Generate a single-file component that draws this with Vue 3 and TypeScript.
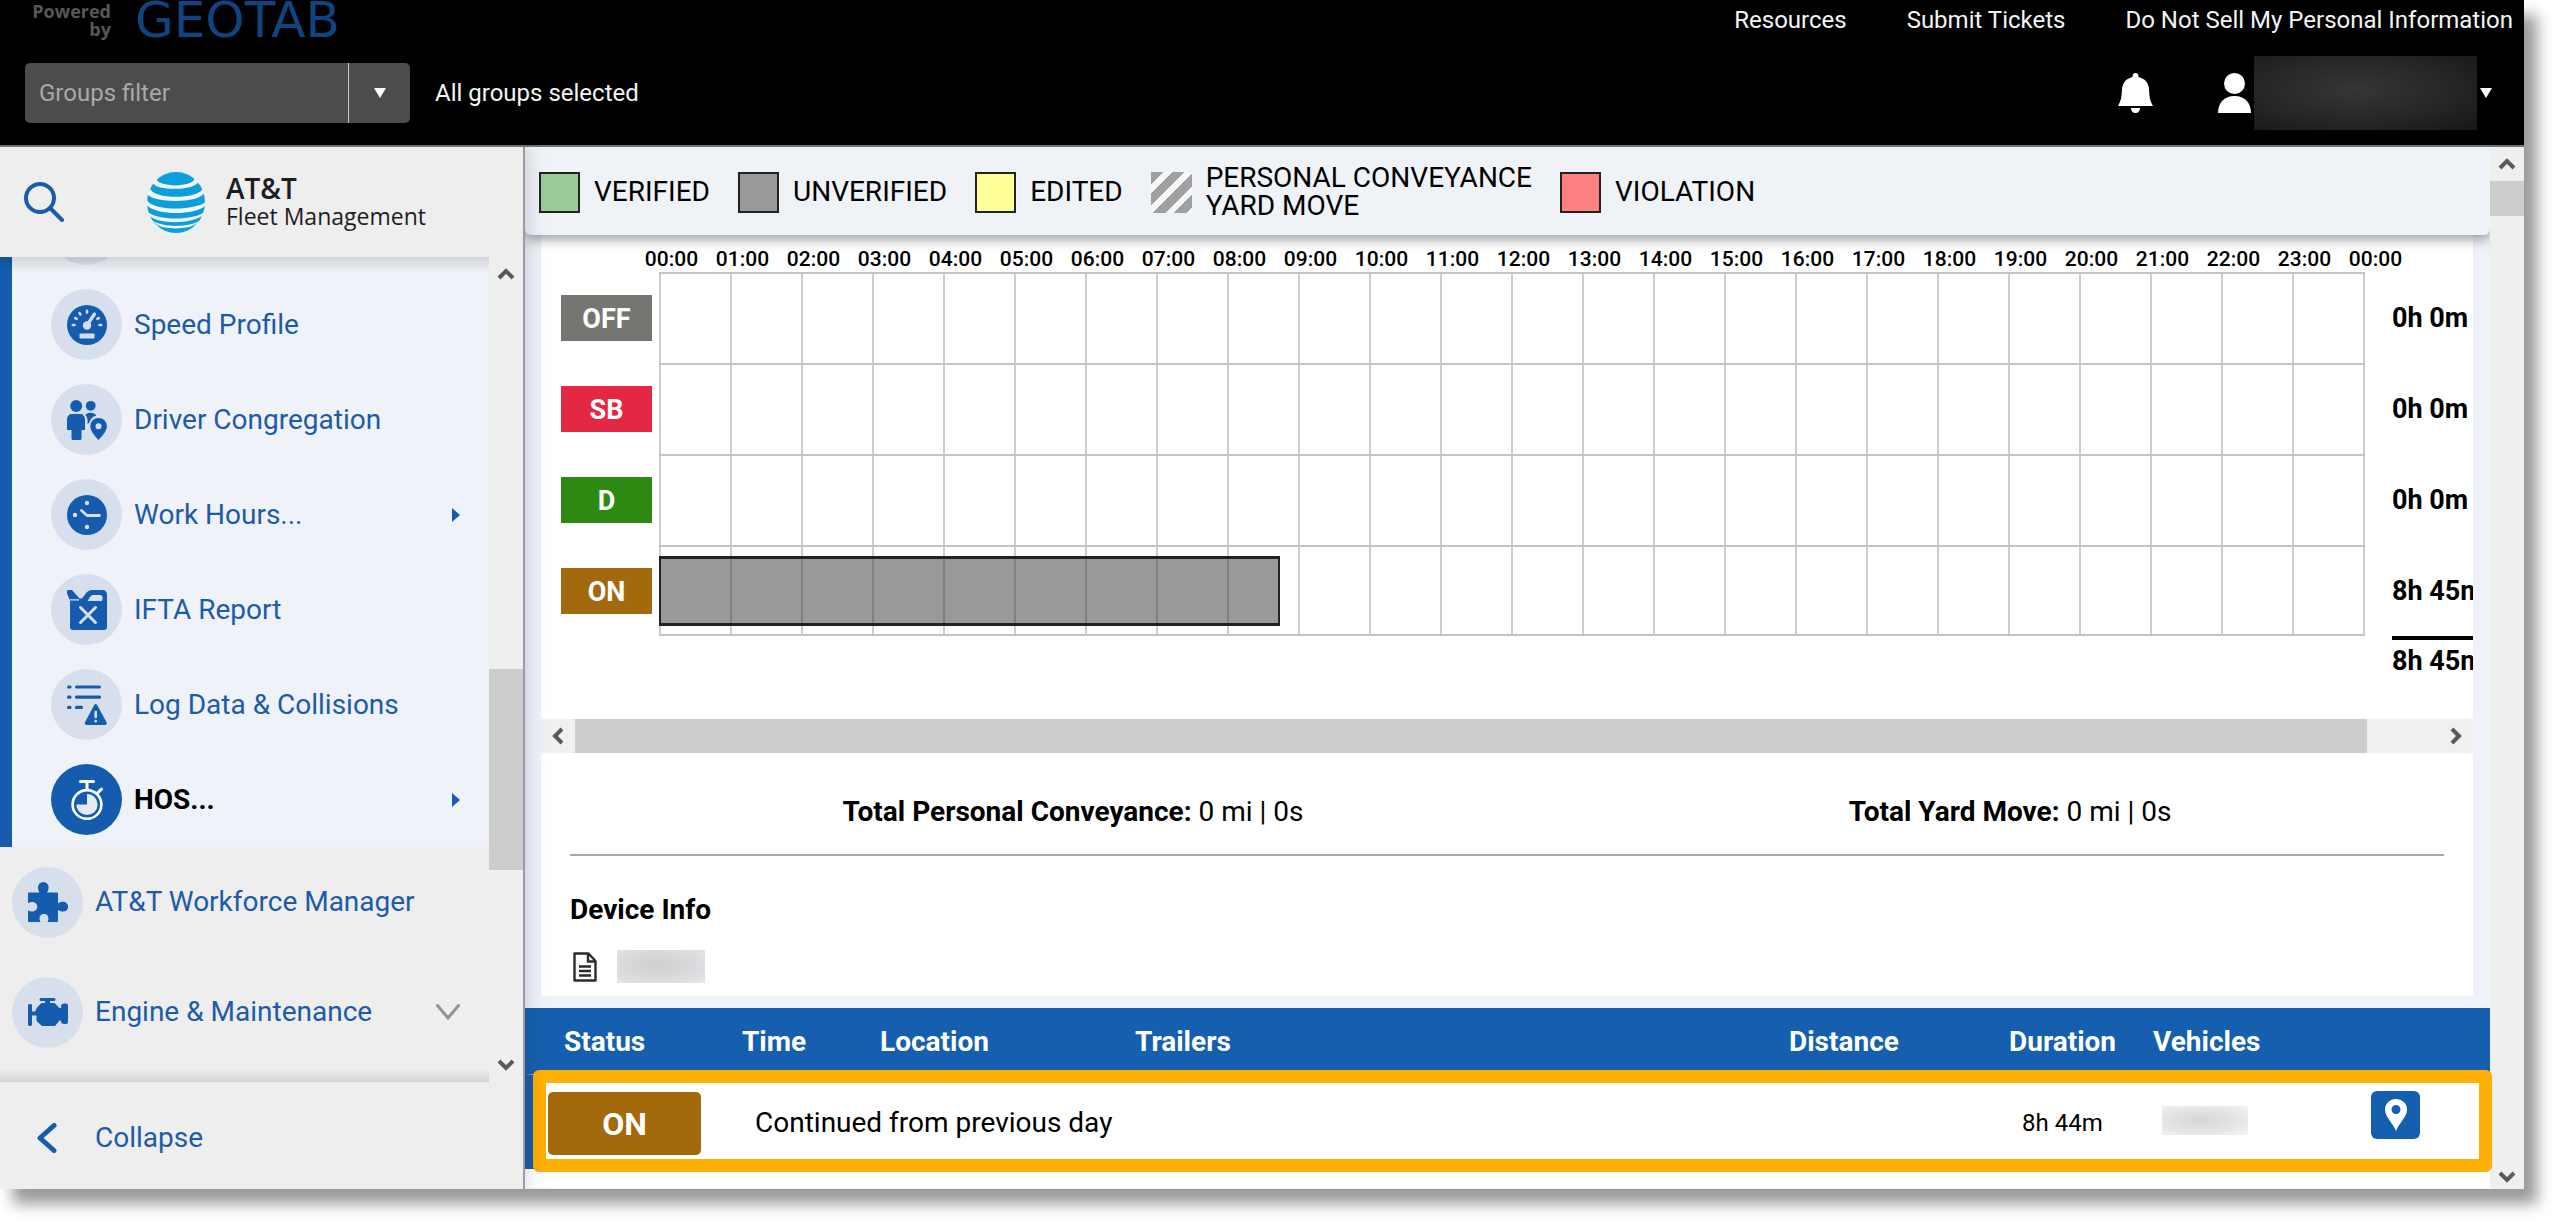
<script setup lang="ts">
import { ref } from 'vue'

interface MenuItem {
  label: string
  icon: string
  active?: boolean
  more?: boolean
}

interface DutyRow {
  code: string
  tone: string
  total: string
  hours: number
}

const filter = ref('')

const reportItems: MenuItem[] = [
  { label: 'Speed Profile', icon: 'speed' },
  { label: 'Driver Congregation', icon: 'drivers' },
  { label: 'Work Hours...', icon: 'clock', more: true },
  { label: 'IFTA Report', icon: 'fuel' },
  { label: 'Log Data & Collisions', icon: 'log' },
  { label: 'HOS...', icon: 'stopwatch', active: true, more: true },
]

const hours: string[] = Array.from({ length: 25 }, (_, h) => `${String(h % 24).padStart(2, '0')}:00`)

const duty: DutyRow[] = [
  { code: 'OFF', tone: 'off', total: '0h 0m', hours: 0 },
  { code: 'SB', tone: 'sb', total: '0h 0m', hours: 0 },
  { code: 'D', tone: 'd', total: '0h 0m', hours: 0 },
  { code: 'ON', tone: 'on', total: '8h 45m', hours: 8.75 },
]

const HOUR_WIDTH = 71
const barWidth = (h: number): string => `${Math.round(h * HOUR_WIDTH)}px`
</script>

<template>
  <div class="app">
    <header class="top">
      <div class="top-row brand-row">
        <div class="powered">
          <span class="powered-by">Powered<br />by</span>
          <span class="geotab">GEOTAB</span>
        </div>
        <nav class="links">
          <a href="#">Resources</a>
          <a href="#">Submit Tickets</a>
          <a href="#">Do Not Sell My Personal Information</a>
        </nav>
      </div>
      <div class="top-row">
        <div class="filter">
          <input v-model="filter" type="text" placeholder="Groups filter" aria-label="Groups filter" />
          <button type="button" aria-label="Open groups filter">
            <svg width="12" height="10" viewBox="0 0 12 10"><path d="M0 0H12L6 10Z" fill="#fff" /></svg>
          </button>
        </div>
        <span class="selected">All groups selected</span>
        <div class="account">
          <button type="button" class="bell" aria-label="Notifications">
            <svg width="35" height="40" viewBox="0 0 35 40" fill="#fff">
              <path d="M17.500 0C15.500 0 14.500 1.500 14.500 4C8 5.500 4.500 10 4 16C3.600 23 3.500 27 0 33H35C31.500 27 31.400 23 31 16C30.500 10 27 5.500 20.500 4C20.500 1.500 19.500 0 17.500 0Z" />
              <path d="M13 35H22C22 38 20 40 17.500 40S13 38 13 35Z" />
            </svg>
          </button>
          <button type="button" class="user" aria-label="Account menu">
            <svg width="33" height="40" viewBox="0 0 33 40" fill="#fff">
              <ellipse cx="16.500" cy="10.500" rx="10.500" ry="10.500" />
              <path d="M0 40C0 30 6 23 16.500 23S33 30 33 40Z" />
            </svg>
            <span class="redacted dark"></span>
            <svg width="12" height="10" viewBox="0 0 12 10"><path d="M0 0H12L6 10Z" fill="#fff" /></svg>
          </button>
        </div>
      </div>
    </header>

    <div class="body">
      <aside class="side">
        <div class="side-head">
          <button type="button" class="search" aria-label="Search">
            <svg width="40" height="40" viewBox="0 0 40 40" fill="none" stroke="#1c5ba8" stroke-width="4" stroke-linecap="round">
              <circle cx="16" cy="16" r="14" />
              <path d="M26 26L38 38" />
            </svg>
          </button>
          <svg class="globe" width="58" height="61" viewBox="0 0 58 60" preserveAspectRatio="none">
            <ellipse cx="29" cy="30" rx="29" ry="30" fill="#0a9fdc" />
            <g fill="#f3f5f6">
              <path d="M9 6.500C10 15 46 16 48 6L51 9.500C50 18 10 19 6 11Z" />
              <path d="M3.500 16.500C6 27 50 27 55.500 17L57 20.500C53 31 8 31 0 22Z" />
              <path d="M0 28C8 39 50 38 59 29L59 32.500C50 43 10 43 0 33Z" />
              <path d="M0 38.500C10 48 46 48 58 39L56.500 42C46 51 14 52 3 43.500Z" />
              <path d="M6 48C16 55 44 54.500 53 47.500L50 50.500C42 57 18 57 10 52Z" />
            </g>
          </svg>
          <div class="product">
            <strong>AT&amp;T</strong>
            <span>Fleet Management</span>
          </div>
        </div>

        <div class="side-mid">
          <nav class="menu" aria-label="Main menu">
            <div class="submenu">
              <a href="#" class="item" aria-label="Previous report"><span class="dot"></span></a>
              <a v-for="item in reportItems" :key="item.label" href="#" class="item" :class="{ active: item.active }">
                <span class="dot">
                  <svg v-if="item.icon === 'speed'" width="40" height="40" viewBox="0 0 40 40">
                    <circle cx="20" cy="20" r="20" fill="#155cae" />
                    <g stroke="#d8dfec" fill="none" stroke-width="2.600" stroke-linecap="round">
                      <path d="M5.800 20H7.500M8.200 13L9.600 13.900M12.500 8L13.500 9.500M20 5.800V7.600M31.800 13L30.400 13.900M34.200 20H32.500" />
                      <path d="M20.500 19.500L27.500 9" stroke-width="3.200" />
                    </g>
                    <circle cx="20" cy="20.500" r="4.200" fill="#d8dfec" />
                    <rect x="12.500" y="28.500" width="15" height="5" rx="1" fill="#d8dfec" />
                  </svg>
                  <svg v-else-if="item.icon === 'drivers'" width="40" height="40" viewBox="0 0 40 40" fill="#155cae">
                    <circle cx="9.200" cy="6" r="6" />
                    <path d="M4.500 14H13.500C16 14 18 16.500 18 20V30H14.500V38.500Q14.500 40 13 40H6Q4.500 40 4.500 38.500V30H0V20C0 16.500 2 14 4.500 14Z" />
                    <circle cx="23.700" cy="5.800" r="4.900" />
                    <path d="M19 14.500C21 12 27 12 29.500 15.500C25.500 16.500 23 19.500 22 23L20.500 24C21 20 20.500 17 18 14.500Z" />
                    <path fill-rule="evenodd" d="M31.500 40C28 36 23.300 31 23.300 26.200A8.300 8.300 0 0 1 39.900 26.200C39.900 31 35 36 31.500 40ZM31.500 29.200A3 3 0 1 0 31.500 23.200A3 3 0 1 0 31.500 29.200Z" />
                  </svg>
                  <svg v-else-if="item.icon === 'clock'" width="40" height="40" viewBox="0 0 40 40">
                    <circle cx="20" cy="20" r="20" fill="#155cae" />
                    <g fill="#d8dfec"><circle cx="20" cy="8" r="2.200" /><circle cx="8" cy="20" r="2.200" /><circle cx="20" cy="32" r="2.200" /></g>
                    <path d="M14.500 15.500L20 20.500H32.500" fill="none" stroke="#d8dfec" stroke-width="2.800" stroke-linecap="round" stroke-linejoin="round" />
                  </svg>
                  <svg v-else-if="item.icon === 'fuel'" width="40" height="40" viewBox="0 0 40 40">
                    <path fill="#155cae" d="M0 1Q0 0 1.500 0H5L12.500 8.500H15L19.500 2.500Q21.500 0 24.500 0H35Q40 0 40 5V37Q40 40 37 40H6Q3 40 3 37V10.500L0 3.500Z" />
                    <path fill="#d8dfec" d="M20.500 11L23 7Q24 5 26 5H33Q35.500 5 35.500 7.500V9.500Q35.500 11 34 11ZM3 9.200H12V10.600H3Z" />
                    <path d="M13.500 17.500L28.500 32.500M28.500 17.500L13.500 32.500" stroke="#d8dfec" stroke-width="3" stroke-linecap="round" />
                  </svg>
                  <svg v-else-if="item.icon === 'log'" width="40" height="40" viewBox="0 0 40 40">
                    <path d="M1.600 2H3M9.500 2H32.500M1.600 12.200H3M9.500 12.200H32.500M1.600 22.400H3M9.500 22.400H14.500" stroke="#155cae" stroke-width="3.200" stroke-linecap="round" />
                    <path d="M28.700 19Q29.600 19 30.300 20.300L39.500 37.300Q40.500 40 38 40H19.500Q17 40 18 37.300L27.100 20.300Q27.800 19 28.700 19Z" fill="#155cae" />
                    <path d="M28.700 27V32M28.700 36V36.200" stroke="#d8dfec" stroke-width="2.600" stroke-linecap="round" />
                  </svg>
                  <svg v-else width="40" height="40" viewBox="0 0 40 40" fill="none" stroke="#fff">
                    <path d="M13.500 1.500H26.500M20 1.500V9M30.500 13L34.500 9.200" stroke-width="3" stroke-linecap="round" />
                    <circle cx="20" cy="24.500" r="14.400" stroke-width="2.600" />
                    <path d="M20 13.900V24.500H9.400A10.600 10.600 0 1 0 20 13.900Z" fill="#e4ebf5" stroke="none" />
                  </svg>
                </span>
                <span class="label">{{ item.label }}</span>
                <svg v-if="item.more" class="more" width="8" height="14" viewBox="0 0 8 14"><path d="M0 0L8 7L0 14Z" fill="#155cae" /></svg>
              </a>
            </div>
            <a href="#" class="item main-item">
              <span class="dot">
                <svg width="40" height="40" viewBox="0 0 40 40" fill="#155cae">
                  <path d="M1 10.500H11.500C10.200 8.500 10 7 10 5.300A5.300 5.300 0 0 1 20.600 5.300C20.600 7 20.300 8.500 19 10.500H29Q30 10.500 30 11.500V21.500C32 20 33.500 19.800 35.200 19.800A4.900 4.900 0 0 1 35.200 29.600C33.500 29.600 32 29.200 30 27.700V39Q30 40 29 40H19.500C21.500 36.500 20.500 32 16 32S10.500 36.500 12.500 40H1Q0 40 0 39V28.300C4 31 9.300 29 9.300 24.800S4 18.500 0 21.300V11.500Q0 10.500 1 10.500Z" />
                </svg>
              </span>
              <span class="label">AT&amp;T Workforce Manager</span>
            </a>
            <a href="#" class="item main-item">
              <span class="dot">
                <svg width="40" height="40" viewBox="0 0 40 40" fill="#155cae">
                  <path d="M13 6H26Q27.500 6 27.500 7.500T26 9H22V11H26.500L31.500 16H33V13.500Q33.500 11.500 36 11.500H38Q40 11.500 40 13.500V30Q40 32 38 32H36Q33.500 32 33 30V28.500H31.500L27 34H14L8.500 29V23.500H4V33Q4 34 2 34T0 33V13Q0 12 2 12T4 13V19.500H7L9 15.500L13.500 11H17V9H13Q11.500 9 11.500 7.500T13 6Z" />
                </svg>
              </span>
              <span class="label">Engine &amp; Maintenance</span>
              <svg class="more" width="24" height="16" viewBox="0 0 24 16"><path d="M1.500 1.500L12 14L22.500 1.500" fill="none" stroke="#949494" stroke-width="3" stroke-linecap="round" /></svg>
            </a>
          </nav>
          <div class="vbar" aria-hidden="true">
            <svg width="18" height="14" viewBox="0 0 18 14"><path d="M2 11L9 4L16 11" fill="none" stroke="#5a5a5a" stroke-width="4" /></svg>
            <div class="track"><div class="thumb side-thumb"></div></div>
            <svg width="18" height="14" viewBox="0 0 18 14"><path d="M2 3L9 10L16 3" fill="none" stroke="#5a5a5a" stroke-width="4" /></svg>
          </div>
        </div>

        <button type="button" class="collapse">
          <svg width="20" height="30" viewBox="0 0 20 30"><path d="M17 2.500L3 15L17 27.500" fill="none" stroke="#155cae" stroke-width="5" stroke-linecap="round" stroke-linejoin="round" /></svg>
          <span>Collapse</span>
        </button>
      </aside>

      <main class="content">
        <ul class="legend">
          <li><i class="swatch verified"></i>VERIFIED</li>
          <li><i class="swatch unverified"></i>UNVERIFIED</li>
          <li><i class="swatch edited"></i>EDITED</li>
          <li><i class="swatch conveyance"></i><span>PERSONAL CONVEYANCE<br />YARD MOVE</span></li>
          <li><i class="swatch violation"></i>VIOLATION</li>
        </ul>

        <section class="panel">
          <div class="chart">
            <div class="hours">
              <span v-for="(h, i) in hours" :key="i">{{ h }}</span>
            </div>
            <div v-for="row in duty" :key="row.code" class="duty">
              <span class="badge" :class="row.tone">{{ row.code }}</span>
              <div class="lane">
                <div v-if="row.hours" class="bar" :style="{ width: barWidth(row.hours) }"></div>
              </div>
              <span class="total">{{ row.total }}</span>
            </div>
            <div class="sum">8h 45m</div>
          </div>
          <div class="hbar" aria-hidden="true">
            <svg width="14" height="18" viewBox="0 0 14 18"><path d="M11 2L4 9L11 16" fill="none" stroke="#5a5a5a" stroke-width="4" /></svg>
            <div class="hthumb"></div>
            <svg width="14" height="18" viewBox="0 0 14 18"><path d="M3 2L10 9L3 16" fill="none" stroke="#5a5a5a" stroke-width="4" /></svg>
          </div>
          <div class="totals">
            <span><b>Total Personal Conveyance:</b> 0 mi | 0s</span>
            <span><b>Total Yard Move:</b> 0 mi | 0s</span>
          </div>
          <div class="device">
            <h2>Device Info</h2>
            <div class="device-row">
              <svg width="24" height="30" viewBox="0 0 24 30" fill="none" stroke="#2b2b2b" stroke-width="2.400">
                <path d="M1.500 1.500H15.500L22.500 9V28.500H1.500Z" stroke-linejoin="round" />
                <path d="M15 1.500V9.500H22.500M6 14.500H18M6 19H18M6 23.500H18" />
              </svg>
              <span class="redacted light"></span>
            </div>
          </div>
        </section>

        <div class="log">
          <table>
            <colgroup>
              <col class="c-status" /><col class="c-time" /><col class="c-location" /><col />
              <col class="c-distance" /><col class="c-duration" /><col class="c-vehicles" /><col class="c-actions" />
            </colgroup>
            <thead>
              <tr>
                <th>Status</th><th>Time</th><th>Location</th><th>Trailers</th>
                <th>Distance</th><th>Duration</th><th>Vehicles</th><th></th>
              </tr>
            </thead>
            <tbody>
              <tr>
                <td class="status"><span class="status-badge">ON</span></td>
                <td colspan="4">Continued from previous day</td>
                <td class="small">8h 44m</td>
                <td class="vehicle-cell"><span class="redacted vehicle"></span></td>
                <td class="action">
                  <button type="button" class="pin" aria-label="Show on map">
                    <svg width="22" height="32" viewBox="0 0 22 32"><path fill="#fff" fill-rule="evenodd" d="M11 32C8 24 0 18 0 10.500A11 10.500 0 0 1 22 10.500C22 18 14 24 11 32ZM11 15A4.500 4.500 0 1 0 11 6A4.500 4.500 0 1 0 11 15Z" /></svg>
                  </button>
                </td>
              </tr>
            </tbody>
          </table>
          <div class="highlight"></div>
        </div>
      </main>

      <div class="vbar page-bar" aria-hidden="true">
        <svg width="18" height="14" viewBox="0 0 18 14"><path d="M2 11L9 4L16 11" fill="none" stroke="#5a5a5a" stroke-width="4" /></svg>
        <div class="track"><div class="thumb page-thumb"></div></div>
        <svg width="18" height="14" viewBox="0 0 18 14"><path d="M2 3L9 10L16 3" fill="none" stroke="#5a5a5a" stroke-width="4" /></svg>
      </div>
    </div>
  </div>
</template>

<style>
body {
  margin: 0;
  background: #fff;
}
</style>

<style scoped>
.app,
.app * {
  box-sizing: border-box;
}
.app {
  margin: 0 36px 37px 0;
  font-family: Roboto, "Liberation Sans", sans-serif;
  font-size: 28px;
  line-height: 32px;
  color: #000;
  box-shadow: 13px 15px 14px rgba(0, 0, 0, 0.4);
}
button {
  padding: 0;
  border: 0;
  background: none;
  font: inherit;
  color: inherit;
}
a {
  color: inherit;
  text-decoration: none;
}
svg {
  display: block;
  flex: none;
}

/* header */
.top {
  height: 147px;
  overflow: hidden;
  background: #000;
  border-bottom: 2px solid #6e7074;
  color: #f4f4f4;
  font-size: 24px;
}
.top-row {
  display: flex;
  align-items: center;
  height: 76px;
  padding: 0 32px 0 25px;
}
.brand-row {
  justify-content: space-between;
  height: 55px;
  padding: 0 11px 15px 27px;
}
.powered {
  display: flex;
  align-items: center;
  gap: 24px;
}
.powered-by {
  width: 84px;
  font: 700 18px/18px "Open Sans", sans-serif;
  text-align: right;
  color: #56575b;
}
.geotab {
  font: 50px/40px "DejaVu Sans", sans-serif;
  color: #0e4580;
}
.links {
  display: flex;
  gap: 60px;
}
.filter {
  display: flex;
  width: 385px;
  height: 60px;
  border-radius: 5px;
  overflow: hidden;
  background: #4c4c4c;
}
.filter input {
  flex: 1;
  min-width: 0;
  padding: 0 14px;
  border: 0;
  outline: 0;
  background: none;
  color: #fff;
  font: inherit;
}
.filter input::placeholder {
  color: #a9a9a9;
  opacity: 1;
}
.filter button {
  display: flex;
  align-items: center;
  justify-content: center;
  width: 62px;
  border-left: 1px solid #c4c4c4;
}
.selected {
  margin-left: 25px;
}
.account {
  display: flex;
  align-items: center;
  gap: 65px;
  margin-left: auto;
}
.user {
  display: flex;
  align-items: center;
  gap: 3px;
}
.redacted {
  display: block;
}
.redacted.dark {
  width: 223px;
  height: 74px;
  background: radial-gradient(ellipse at 45% 45%, #363636, #262626 55%, #171717);
}
.redacted.light {
  width: 88px;
  height: 33px;
  background: radial-gradient(ellipse at 45% 45%, #cfcfcf, #dedfe2 75%, #e6e8ea);
}
.redacted.vehicle {
  width: 86px;
  height: 29px;
  background: radial-gradient(ellipse at 45% 50%, #d6d6d6, #e6e6e6 60%, #f5f5f5);
}

/* sidebar */
.body {
  display: flex;
}
.side {
  position: relative;
  z-index: 2;
  display: flex;
  flex-direction: column;
  flex: none;
  width: 525px;
  background: #eee;
  border-right: 2px solid #9b9c9f;
  box-shadow: 0 0 20px rgba(40, 50, 80, 0.25);
  clip-path: inset(0 -30px 0 0);
  color: #1c5ba8;
}
.side-head {
  display: flex;
  align-items: center;
  height: 110px;
  padding-left: 24px;
}
.globe {
  margin-left: 83px;
}
.product {
  display: flex;
  flex-direction: column;
  margin-left: 21px;
  font-family: "Open Sans", sans-serif;
  color: #1d1d1f;
  font-size: 23px;
  line-height: 28px;
}
.product strong {
  font-weight: 600;
  font-size: 28px;
}
.side-mid {
  display: flex;
  flex: 1;
  min-height: 0;
}
.menu {
  position: relative;
  display: flex;
  flex-direction: column;
  justify-content: flex-end;
  flex: 1;
  height: 825px;
  padding-bottom: 15px;
  overflow: hidden;
}
.menu::before,
.menu::after {
  content: "";
  position: absolute;
  left: 0;
  right: 0;
  top: 0;
  height: 16px;
  background: linear-gradient(rgba(0, 0, 0, 0.12), rgba(0, 0, 0, 0));
}
.menu::after {
  top: auto;
  bottom: 0;
  height: 13px;
  background: linear-gradient(rgba(0, 0, 0, 0), rgba(0, 0, 0, 0.12));
}
.submenu {
  flex: none;
  background: #eff2f8;
  border-left: 12px solid #155cae;
}
.item {
  display: flex;
  flex: none;
  align-items: center;
  gap: 12px;
  height: 95px;
  padding: 0 29px 0 39px;
}
.main-item {
  height: 110px;
  padding-left: 12px;
}
.dot {
  display: flex;
  align-items: center;
  justify-content: center;
  flex: none;
  width: 71px;
  height: 71px;
  border-radius: 50%;
  background: #d8dfec;
}
.active {
  color: #000;
  font-weight: 700;
}
.active .dot {
  background: #155cae;
}
.label {
  flex: 1;
}
.vbar {
  display: flex;
  flex-direction: column;
  align-items: center;
  flex: none;
  width: 34px;
  padding: 10px 0;
  background: #efefef;
}
.page-bar {
  padding-bottom: 5px;
}
.track {
  flex: 1;
  align-self: stretch;
}
.thumb {
  background: #cdcdcd;
}
.side-thumb {
  height: 201px;
  margin-top: 388px;
}
.page-thumb {
  height: 35px;
  margin-top: 10px;
}
.collapse {
  display: flex;
  align-items: center;
  gap: 38px;
  height: 107px;
  padding: 4px 0 0 37px;
}

/* content */
.content {
  flex: 1;
  min-width: 0;
  background: #eff2f8;
}
.legend {
  position: relative;
  z-index: 1;
  display: flex;
  align-items: center;
  gap: 28px;
  height: 88px;
  margin: 0;
  padding: 2px 14px 0;
  list-style: none;
  background: #eff2f7;
  border-radius: 0 0 6px 6px;
  box-shadow: 0 3px 14px rgba(0, 0, 0, 0.45);
  clip-path: inset(0 0 -20px 0);
  line-height: 28px;
}
.legend li {
  display: flex;
  align-items: center;
  gap: 14px;
}
.swatch {
  width: 41px;
  height: 41px;
  border: 2px solid #222;
}
.verified { background: #99cc99; }
.unverified { background: #999; }
.edited { background: #ffff99; }
.violation { background: #ff8080; }
.conveyance {
  border: 0;
  background: repeating-linear-gradient(135deg, #a0a0a0 0 9px, #f6f7fa 9px 15px);
}
.panel {
  margin: 0 17px 0 16px;
  background: #fff;
}
.chart {
  height: 484px;
  padding: 12px 0 0 20px;
  overflow: hidden;
}
.hours {
  display: flex;
  height: 25px;
  margin-left: 75px;
  font-size: 21px;
  line-height: 24px;
  font-weight: 500;
}
.hours span {
  flex: none;
  width: 71px;
  text-align: center;
}
.duty {
  display: flex;
  align-items: center;
  height: 91px;
  white-space: nowrap;
  font-size: 27px;
  font-weight: 700;
}
.badge {
  flex: none;
  width: 91px;
  height: 46px;
  margin-right: 7px;
  line-height: 48px;
  text-align: center;
  color: #fff;
}
.off { background: #757571; }
.sb { background: #e42843; }
.d { background: #2c8a12; }
.on { background: #a3690d; }
.lane {
  display: flex;
  align-items: center;
  flex: none;
  width: 1706px;
  height: 91px;
  border-top: 2px solid #c4c4c4;
  background: repeating-linear-gradient(90deg, #cdcdcd 0 2px, transparent 2px 71px);
}
.duty:nth-last-child(2) .lane {
  border-bottom: 2px solid #c4c4c4;
}
.bar {
  height: 70px;
  border: 3px solid #222;
  border-width: 3px 2px;
  background: repeating-linear-gradient(90deg, #808080 0 2px, #999 2px 71px);
  background-origin: border-box;
}
.total {
  margin-left: 27px;
}
.sum {
  margin-left: 1831px;
  border-top: 4px solid #000;
  padding-top: 5px;
  font-size: 27px;
  font-weight: 700;
  white-space: nowrap;
}
.hbar {
  display: flex;
  align-items: center;
  gap: 10px;
  height: 34px;
  padding: 0 10px;
  background: #f0f0f0;
}
.hthumb {
  flex: 1;
  height: 34px;
  margin-right: 72px;
  background: #cdcdcd;
}
.totals {
  display: flex;
  align-items: center;
  justify-content: space-around;
  height: 103px;
  margin: 0 29px;
  padding-top: 16px;
  border-bottom: 2px solid #a8a8a8;
}
.device {
  height: 140px;
  padding: 38px 29px 0;
}
.device h2 {
  margin: 0;
  font: inherit;
  font-weight: 700;
}
.device-row {
  display: flex;
  align-items: center;
  gap: 20px;
  margin-top: 24px;
  padding-left: 3px;
}

/* log table */
.log {
  position: relative;
  margin-top: 12px;
  padding-bottom: 19px;
  background: #fff;
}
table {
  width: 100%;
  table-layout: fixed;
  border-collapse: separate;
  border-spacing: 0;
}
.c-status { width: 178px; }
.c-time { width: 138px; }
.c-location { width: 255px; }
.c-distance { width: 220px; }
.c-duration { width: 144px; }
.c-vehicles { width: 218px; }
.c-actions { width: 158px; }
th {
  height: 66px;
  padding: 2px 0 0 39px;
  background: #155fae;
  color: #fff;
  text-align: left;
  font-weight: 700;
}
td {
  height: 95px;
  padding: 2px 0 0 52px;
  border-top: 1px solid #dfe6f2;
}
td.status {
  padding-left: 10px;
  border-left: 13px solid #1a5ba6;
}
td.small {
  font-size: 24px;
}
td.vehicle-cell {
  padding: 0 0 4px 48px;
}
td.action {
  padding: 0 0 14px 39px;
}
.status-badge {
  display: block;
  width: 153px;
  height: 63px;
  border-radius: 5px;
  background: #a3690d;
  color: #fff;
  text-align: center;
  font-size: 32px;
  line-height: 64px;
  font-weight: 700;
}
.pin {
  display: flex;
  align-items: center;
  justify-content: center;
  width: 49px;
  height: 48px;
  border-radius: 6px;
  background: #155fae;
}
.highlight {
  position: absolute;
  top: 62px;
  left: 8px;
  right: -2px;
  bottom: 16px;
  border: 13px solid #ffb005;
  border-radius: 6px;
  pointer-events: none;
}
</style>
